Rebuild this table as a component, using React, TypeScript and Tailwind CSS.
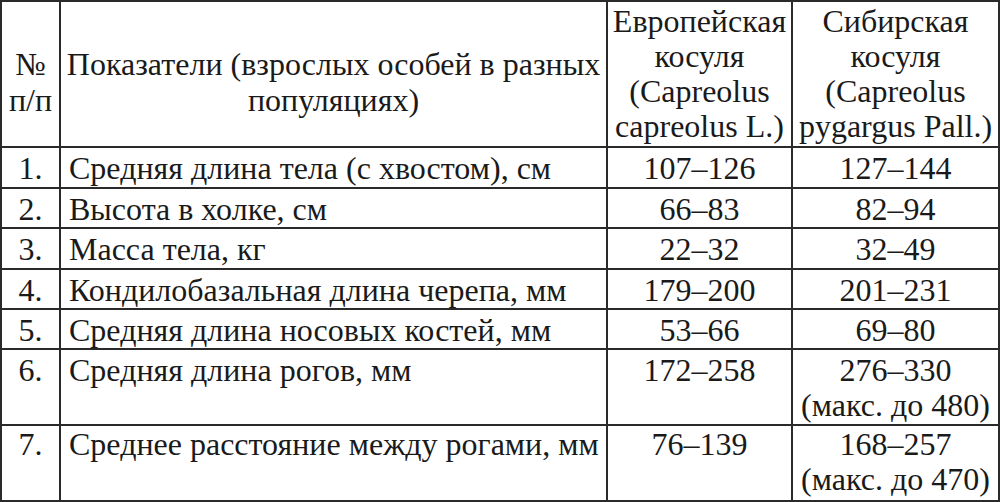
import React from 'react';

const rows: { n: string; name: string; eu: string[]; sib: string[] }[] = [
  { n: '1.', name: 'Средняя длина тела (с хвостом), см', eu: ['107–126'], sib: ['127–144'] },
  { n: '2.', name: 'Высота в холке, см', eu: ['66–83'], sib: ['82–94'] },
  { n: '3.', name: 'Масса тела, кг', eu: ['22–32'], sib: ['32–49'] },
  { n: '4.', name: 'Кондилобазальная длина черепа, мм', eu: ['179–200'], sib: ['201–231'] },
  { n: '5.', name: 'Средняя длина носовых костей, мм', eu: ['53–66'], sib: ['69–80'] },
  { n: '6.', name: 'Средняя длина рогов, мм', eu: ['172–258'], sib: ['276–330', '(макс. до 480)'] },
  { n: '7.', name: 'Среднее расстояние между рогами, мм', eu: ['76–139'], sib: ['168–257', '(макс. до 470)'] },
];

const line = 'border-[#2a2a2a]';

const App = () => {
  return (
    <div className="w-[1000px] h-[502px] bg-white overflow-hidden">
      <div
        className={`grid grid-cols-[59px_547px_185px_205px] grid-rows-[146px_41px_40px_41px_40px_40px_76px_74px] w-[1000px] h-[502px] border-2 ${line} font-['Liberation_Serif'] text-[32px] leading-[35px] text-[#1a1a1a]`}
      >
        {/* header */}
        <div className={`border-r-2 border-b-2 ${line} text-center pt-[44px] leading-[36px]`}>
          №<br />п/п
        </div>
        <div className={`border-r-2 border-b-2 ${line} text-center pt-[44px] px-1 leading-[36px]`}>
          Показатели (взрослых особей в разных популяциях)
        </div>
        <div className={`border-r-2 border-b-2 ${line} text-center pt-[2px] whitespace-nowrap`}>
          Европейская<br />косуля<br />(Capreolus<br />capreolus L.)
        </div>
        <div className={`border-b-2 ${line} text-center pt-[2px] whitespace-nowrap`}>
          Сибирская<br />косуля<br />(Capreolus<br />pygargus Pall.)
        </div>

        {rows.map((r, i) => {
          const last = i === rows.length - 1;
          const b = last ? 'pt-[1px]' : 'border-b-2 pt-[3px]';
          return (
            <React.Fragment key={r.n}>
              <div className={`border-r-2 ${b} ${line} text-center`}>{r.n}</div>
              <div className={`border-r-2 ${b} ${line} pl-[8px] whitespace-nowrap`}>{r.name}</div>
              <div className={`border-r-2 ${b} ${line} text-center`}>
                {r.eu.map((l) => (
                  <div key={l}>{l}</div>
                ))}
              </div>
              <div className={`${b} ${line} text-center whitespace-nowrap`}>
                {r.sib.map((l) => (
                  <div key={l}>{l}</div>
                ))}
              </div>
            </React.Fragment>
          );
        })}
      </div>
    </div>
  );
};

export default App;
